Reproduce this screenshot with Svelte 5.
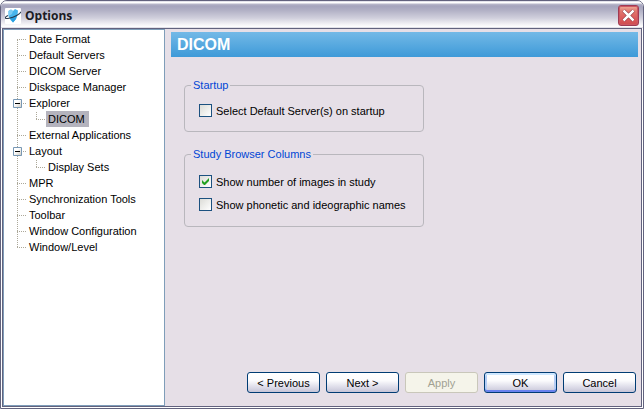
<script>
  const tree = [
    { name: 'Date Format' },
    { name: 'Default Servers' },
    { name: 'DICOM Server' },
    { name: 'Diskspace Manager' },
    { name: 'Explorer', children: ['DICOM'] },
    { name: 'External Applications' },
    { name: 'Layout', children: ['Display Sets'] },
    { name: 'MPR' },
    { name: 'Synchronization Tools' },
    { name: 'Toolbar' },
    { name: 'Window Configuration' },
    { name: 'Window/Level' }
  ];
  let selected = $state('DICOM');
  let collapsed = $state({});
  let selectServers = $state(false);
  let showCount = $state(true);
  let showNames = $state(false);
</script>

<div class="window">
  <header class="titlebar">
    <svg class="logo" width="16" height="16" viewBox="0 0 16 16" aria-hidden="true">
      <rect width="16" height="16" rx="1" fill="#fff" />
      <path d="M3.500 3 6 1.500 8 3 10 1 13 2.500 12.500 7 11 11 8 14.500 5.500 12 3.500 8Z" fill="#45b4ec" />
      <path d="M3.500 3 6 1.500 8 3 7 6 3.800 8Z" fill="#7accf4" />
      <path d="M5 10 12 7 11 11 8 14.500Z" fill="#299fe0" />
      <path d="M3 7.500C-1 9.500-.5 11 4 10.200 9 9.300 15.500 6 15.700 3.800" fill="none" stroke="#25394d" stroke-width="1.100" />
    </svg>
    <h1>Options</h1>
    <button class="close" aria-label="Close">
      <svg width="13" height="13" viewBox="0 0 13 13" aria-hidden="true">
        <path d="M1.500 1.500 11.500 11.500M11.500 1.500 1.500 11.500" stroke="#7c2430" stroke-width="3.500" />
        <path d="M1.500 1.500 11.500 11.500M11.500 1.500 1.500 11.500" stroke="#fff" stroke-width="2.500" />
      </svg>
    </button>
  </header>

  <div class="body">
    <nav class="tree" aria-label="Option pages">
      <ul>
        {#each tree as node}
          <li>
            {#if node.children}
              <button
                class="toggle"
                aria-label="Toggle {node.name}"
                aria-expanded={!collapsed[node.name]}
                onclick={() => (collapsed[node.name] = !collapsed[node.name])}
              >
                <svg width="9" height="9" viewBox="0 0 9 9" aria-hidden="true">
                  <path d="M2 4.500h5" stroke="#000" />
                  {#if collapsed[node.name]}<path d="M4.500 2v5" stroke="#000" />{/if}
                </svg>
              </button>
            {/if}
            <button class="node" class:selected={selected === node.name} onclick={() => (selected = node.name)}>{node.name}</button>
            {#if node.children && !collapsed[node.name]}
              <ul>
                {#each node.children as child}
                  <li>
                    <button class="node" class:selected={selected === child} onclick={() => (selected = child)}>{child}</button>
                  </li>
                {/each}
              </ul>
            {/if}
          </li>
        {/each}
      </ul>
    </nav>

    <main>
      <h2>DICOM</h2>
      <form class="groups">
        <fieldset>
          <legend>Startup</legend>
          <label><input type="checkbox" bind:checked={selectServers} />Select Default Server(s) on startup</label>
        </fieldset>
        <fieldset class="columns">
          <legend>Study Browser Columns</legend>
          <label><input type="checkbox" bind:checked={showCount} />Show number of images in study</label>
          <label><input type="checkbox" bind:checked={showNames} />Show phonetic and ideographic names</label>
        </fieldset>
      </form>
      <footer>
        <button class="push">&lt; Previous</button>
        <button class="push">Next &gt;</button>
        <button class="push" disabled>Apply</button>
        <button class="push default">OK</button>
        <button class="push">Cancel</button>
      </footer>
    </main>
  </div>
</div>

<style>
  :global(body) {
    background: #fff;
  }
  .window,
  .window * {
    box-sizing: border-box;
  }
  .window {
    display: flex;
    flex-direction: column;
    min-height: 100vh;
    padding: 0 1px 1px;
    border: 1px solid #62627e;
    border-radius: 7px 7px 0 0;
    background: #fff;
    color: #000;
    font: 11px/16px "Liberation Sans", Arial, sans-serif;
  }
  button {
    margin: 0;
    padding: 0;
    border: 0;
    background: none;
    color: inherit;
    font: inherit;
  }
  .titlebar {
    display: flex;
    align-items: center;
    height: 27px;
    margin: 0 -1px;
    padding: 2px 4px 0;
    border-radius: 6px 6px 0 0;
    background: linear-gradient(#c9c8d8 0, #fff 1px, #fff 2px, #b9b8cb 3px, #a5a4bd 5px, #b0afc4 9px, #d0cfdc 17px, #f2f1f5 23px, #fff 26px, #c4c3d2 27px);
  }
  h1 {
    flex: 1;
    margin: 0 0 0 4px;
    color: #1c1c24;
    font: bold 12px/18px "Open Sans", "Noto Sans", sans-serif;
  }
  .close {
    display: grid;
    place-items: center;
    width: 21px;
    height: 21px;
    border: 1px solid #a03a52;
    border-radius: 3px;
    background: linear-gradient(#f0b09a, #e07870 5px, #dc5c5c 12px, #cf4c50);
    box-shadow: inset 0 0 0 1px #cc5862;
  }
  .body {
    display: flex;
    flex: 1;
    border: 1px solid #62627e;
    background: #e6dfe7;
  }
  .tree {
    flex: 0 0 162px;
    padding: 1px 0 0 9px;
    border: 1px solid #7f9db9;
    background: #fff;
  }
  ul {
    margin: 0;
    padding: 0;
    list-style: none;
  }
  li {
    position: relative;
    padding-left: 14px;
  }
  li li {
    padding-left: 19px;
  }
  li::before {
    content: "";
    position: absolute;
    top: 0;
    bottom: 0;
    left: 4px;
    width: 1px;
    background: repeating-linear-gradient(#fff 0 1px, #aca899 1px 2px);
  }
  li:first-child::before {
    top: 8px;
  }
  li:last-child::before {
    bottom: auto;
    height: 8px;
  }
  li li:first-child::before {
    top: 0;
    left: 9px;
  }
  li::after {
    content: "";
    position: absolute;
    top: 8px;
    left: 4px;
    width: 10px;
    height: 1px;
    background: repeating-linear-gradient(90deg, #aca899 0 1px, #fff 1px 2px);
  }
  li li::after {
    left: 9px;
  }
  .toggle {
    position: absolute;
    z-index: 1;
    top: 4px;
    left: 0;
    width: 9px;
    height: 9px;
    border-radius: 1px;
    background: linear-gradient(135deg, #fff 40%, #c9c4b8);
    box-shadow: inset 0 0 0 1px #7898b5;
  }
  .toggle svg {
    display: block;
  }
  .node {
    display: block;
    height: 16px;
    padding: 0 4px 0 2px;
    white-space: nowrap;
  }
  .node.selected {
    background: #b4b3bd;
  }
  main {
    display: flex;
    flex: 1;
    flex-direction: column;
    padding: 3px 3px 13px 6px;
  }
  h2 {
    height: 25px;
    margin: 0;
    padding-left: 6px;
    background: linear-gradient(#73b9e7, #3e9ad8);
    color: #fff;
    font: bold 16px/25px "Liberation Sans", Arial, sans-serif;
  }
  .groups {
    display: flex;
    flex: 1;
    flex-direction: column;
    gap: 14px;
    width: 240px;
    margin: 20px 0 0 13px;
  }
  fieldset {
    min-width: 0;
    margin: 0;
    padding: 8px 14px 11px;
    border: 1px solid #b9b7bd;
    border-radius: 4px;
  }
  .columns {
    padding: 10px 14px 12px;
  }
  legend {
    margin-left: -8px;
    padding: 0 2px;
    color: #0046d5;
    line-height: 16px;
  }
  label {
    display: flex;
    align-items: center;
    gap: 4px;
    height: 19px;
    white-space: nowrap;
  }
  label + label {
    margin-top: 4px;
  }
  input {
    flex: none;
    appearance: none;
    width: 13px;
    height: 13px;
    margin: 0;
    border: 1px solid #1c5180;
    background: linear-gradient(135deg, #dcdcd7, #fff) padding-box;
  }
  input:checked {
    background:
      url("data:image/svg+xml,%3Csvg xmlns='http://www.w3.org/2000/svg' viewBox='0 0 11 11'%3E%3Cpath d='M2 4v3l2 2h1l4-4V2L4.500 6.500Z' fill='%2321a121'/%3E%3C/svg%3E") center / 11px 11px no-repeat,
      linear-gradient(135deg, #dcdcd7, #fff) padding-box;
  }
  footer {
    display: flex;
    justify-content: flex-end;
    gap: 6px;
    padding-right: 2px;
  }
  .push {
    width: 73px;
    height: 21px;
    border: 1px solid #003c74;
    border-radius: 3px;
    background: linear-gradient(#fff, #fbfbfd 40%, #dcdbe8 75%, #c6c5d7);
    line-height: 18px;
  }
  .push.default {
    box-shadow: inset 0 2px #cee7ff, inset 0 -2px #6982ee, inset 2px 0 #b5cdf5, inset -2px 0 #b5cdf5;
  }
  .push:disabled {
    border-color: #c9c7ba;
    background: #f5f4ea;
    color: #a1a192;
  }
</style>
